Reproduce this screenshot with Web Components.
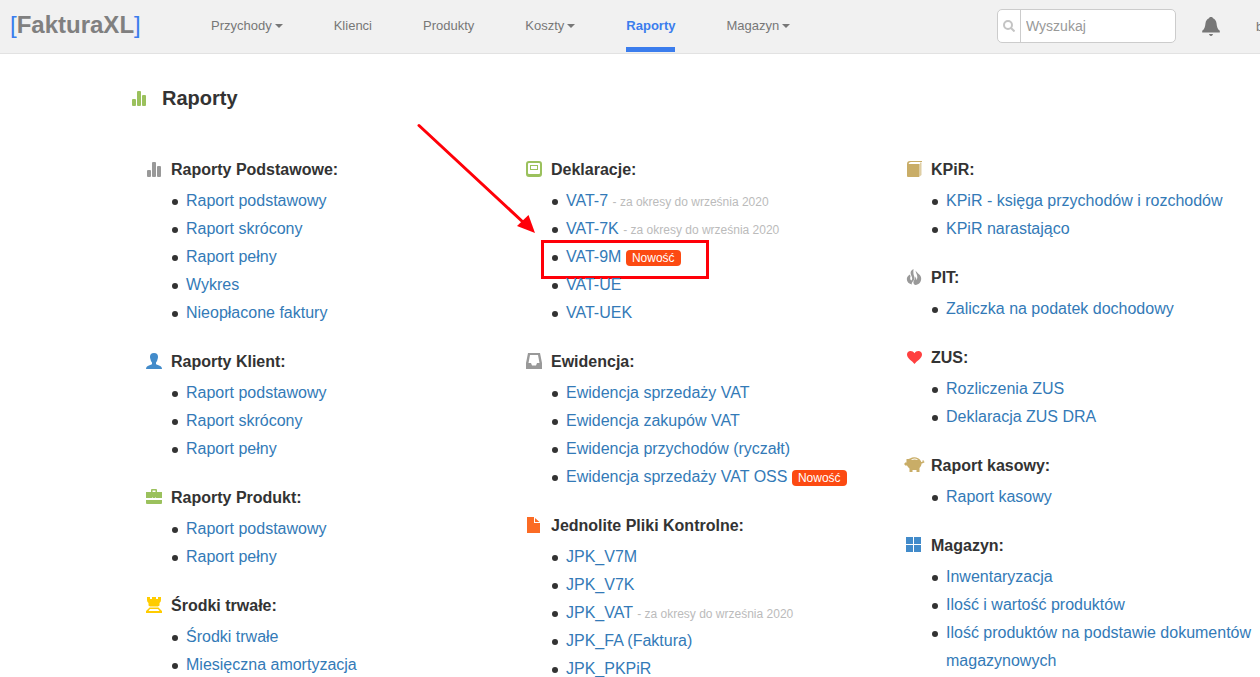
<!DOCTYPE html>
<html lang="pl">
<head>
<meta charset="utf-8">
<title>FakturaXL - Raporty</title>
<style>
  html { overflow: hidden; }
  body { margin: 0; background: #fff; color: #333; font: 16px/28px "Liberation Sans", Arial, sans-serif; }
</style>
</head>
<body>
<app-header>
  <nav-item menu>Przychody</nav-item>
  <nav-item>Klienci</nav-item>
  <nav-item>Produkty</nav-item>
  <nav-item menu>Koszty</nav-item>
  <nav-item active>Raporty</nav-item>
  <nav-item menu>Magazyn</nav-item>
</app-header>
<report-page heading="Raporty">
  <report-column>
    <report-group icon="bars" heading="Raporty Podstawowe:">
      <report-item label="Raport podstawowy"></report-item>
      <report-item label="Raport skrócony"></report-item>
      <report-item label="Raport pełny"></report-item>
      <report-item label="Wykres"></report-item>
      <report-item label="Nieopłacone faktury"></report-item>
    </report-group>
    <report-group icon="user" heading="Raporty Klient:">
      <report-item label="Raport podstawowy"></report-item>
      <report-item label="Raport skrócony"></report-item>
      <report-item label="Raport pełny"></report-item>
    </report-group>
    <report-group icon="briefcase" heading="Raporty Produkt:">
      <report-item label="Raport podstawowy"></report-item>
      <report-item label="Raport pełny"></report-item>
    </report-group>
    <report-group icon="rook" heading="Środki trwałe:">
      <report-item label="Środki trwałe"></report-item>
      <report-item label="Miesięczna amortyzacja"></report-item>
    </report-group>
  </report-column>
  <report-column>
    <report-group icon="declaration" heading="Deklaracje:">
      <report-item label="VAT-7"><period-note>- za okresy do września 2020</period-note></report-item>
      <report-item label="VAT-7K"><period-note>- za okresy do września 2020</period-note></report-item>
      <report-item label="VAT-9M"><new-badge>Nowość</new-badge><arrow-callout></arrow-callout></report-item>
      <report-item label="VAT-UE"></report-item>
      <report-item label="VAT-UEK"></report-item>
    </report-group>
    <report-group icon="inbox" heading="Ewidencja:">
      <report-item label="Ewidencja sprzedaży VAT"></report-item>
      <report-item label="Ewidencja zakupów VAT"></report-item>
      <report-item label="Ewidencja przychodów (ryczałt)"></report-item>
      <report-item label="Ewidencja sprzedaży VAT OSS"><new-badge>Nowość</new-badge></report-item>
    </report-group>
    <report-group icon="file" heading="Jednolite Pliki Kontrolne:">
      <report-item label="JPK_V7M"></report-item>
      <report-item label="JPK_V7K"></report-item>
      <report-item label="JPK_VAT"><period-note>- za okresy do września 2020</period-note></report-item>
      <report-item label="JPK_FA (Faktura)"></report-item>
      <report-item label="JPK_PKPiR"></report-item>
    </report-group>
  </report-column>
  <report-column>
    <report-group icon="book" heading="KPiR:">
      <report-item label="KPiR - księga przychodów i rozchodów"></report-item>
      <report-item label="KPiR narastająco"></report-item>
    </report-group>
    <report-group icon="fire" heading="PIT:">
      <report-item label="Zaliczka na podatek dochodowy"></report-item>
    </report-group>
    <report-group icon="heart" heading="ZUS:">
      <report-item label="Rozliczenia ZUS"></report-item>
      <report-item label="Deklaracja ZUS DRA"></report-item>
    </report-group>
    <report-group icon="pig" heading="Raport kasowy:">
      <report-item label="Raport kasowy"></report-item>
    </report-group>
    <report-group icon="tiles" heading="Magazyn:">
      <report-item label="Inwentaryzacja"></report-item>
      <report-item label="Ilość i wartość produktów"></report-item>
      <report-item label="Ilość produktów na podstawie dokumentów magazynowych"></report-item>
    </report-group>
  </report-column>
</report-page>

<script>
const ICONS = {
  bars: ['#999', '<rect x="1" y="9" width="4" height="7" rx="1"/><rect x="6" y="1" width="4" height="15" rx="1"/><rect x="11" y="5" width="4" height="11" rx="1"/>'],
  user: ['#428bca', '<path d="M8 0C5.200 0 4 1.600 4 3.800c0 1 .1 1.600.5 2.400.3 1.800.9 2.700 1.500 3.300v1.500c-.5.600-1.500.9-3 1.400C1.200 13 0 13.700 0 16h16c0-2.300-1.200-3-3-3.600-1.500-.5-2.500-.8-3-1.400V9.500c.6-.6 1.200-1.500 1.500-3.300.4-.8.5-1.400.5-2.400C12 1.600 10.800 0 8 0z"/>'],
  briefcase: ['#9bc15d', '<path d="M5 3V1q0-1 1-1h4q1 0 1 1v2h5v6h-6V8H9.500v1h-3V8H6v1H0V3zM6.500 3h3V1.500h-3zM0 11h16v3q0 1-1 1H1q-1 0-1-1z"/>'],
  rook: ['#fc0', '<path d="M1 0h3v2h2V0h4v2h2V0h3v3q0 2-1.500 3v2.500L12 9.500H4L2.500 8.500V6Q1 5 1 3z"/><path fill-rule="evenodd" d="M3.500 10.500h9L16 14v2H0v-2zm.5 1.500L2.500 14h11L12 12z"/>'],
  declaration: ['#9bc15d', '<path fill-rule="evenodd" d="M3 0h10q3 0 3 3v10q0 3-3 3H3q-3 0-3-3V3q0-3 3-3zm0 2Q2 2 2 3v9q0 1 1 1h10q1 0 1-1V3q0-1-1-1zM4 4h8v5H4zm1 1v3h6V5z"/>'],
  inbox: ['#999', '<path fill-rule="evenodd" d="M2 0h12l2 10v6H0V10zm2 2-1.500 8H5l1 2.500h4l1-2.500h2.500L12 2z"/>'],
  file: ['#fb6b24', '<path d="M1 0h7v6h6v10H1zM9 1l4.500 4H9z"/>'],
  book: ['#c9ad67', '<path d="M1 3h12v13H2q-1 0-1-1z"/><path d="M13 3h1V1.500h1.500V14L13 16z" fill-opacity=".6"/><path d="M1 3q0-3 3-3h12v1H5Q3 1 2.500 3z"/>'],
  fire: ['#999', '<path d="M7.500 0C4 1.500 4.200 4.500 5.500 7c1 2 1 3.500-.2 4.500C4 10.500 4 9 4.500 7.500l-.5-2C2.500 6.500.8 7.500.8 10c0 3 2.200 5 5.200 5.500-1-2 1.800-3.500 2.500-5.500.5-1.800-.8-3-1-5-.2-1.800-.2-3.500 0-5z"/><path d="M9.500 1.500c.5 3 1.800 4 1.800 6.500 0 1.500-.3 2.200-1 3 0-1.500-.2-2.500-.8-3.500 0 3-2.500 4-2 6.500.2 1 .8 1.600 2 2 3.500-.5 5.700-3 5.700-6.500C15.200 6 12 5 9.500 1.500z"/>'],
  heart: ['#ff4040', '<path d="M8.500 15C6.500 12 1 9.500 1 5.500 1 3.300 2.500 2 4.500 2 6.200 2 7.500 2.800 8.500 4.200 9.500 2.800 10.500 2 12.300 2 14.500 2 16 3.300 16 5.500 16 9.500 10.500 12 8.500 15z"/>'],
  pig: ['#c9ad67', '<path fill-rule="evenodd" d="M4 1.500Q8-.8 12.500 1.500c1 .6 2.200 1.700 2.800 3.500 1.300 0 1.500-.6 1.200-1.800h1q.4.800.2 1.300h.6v1.200h-.8c-.4.500-1 .8-1.900.8-.1 1.800-1 3.200-2.100 4.500v4H10.500v-2h-4v2H3.500v-3.500C2.300 10.500 1.500 9.500 1 8.500h-2V7.500h-1v-1h1V5.500h1.500C.4 4 .5 3.200.5 2q2.200 0 3.500-.5zM5.500 3q3.300-1.200 6 0v-.8q-2.700-1.200-6 0z"/>'],
  tiles: ['#428bca', '<path d="M0 0h7v7H0zM8 0h7v7H8zM0 8h7v7H0zM8 8h7v7H8z"/>']
};

const define = (name, render) => customElements.define(name, class extends HTMLElement {
  connectedCallback() {
    if (!this.shadowRoot) this.attachShadow({ mode: 'open' }).innerHTML = render(this);
  }
});

define('ui-icon', el => {
  const [color, shape] = ICONS[el.getAttribute('name')];
  return `<style>
    :host { display: block; flex: none; width: 16px; height: 16px; }
    svg { display: block; overflow: visible; fill: var(--icon-color, ${color}); }
  </style><svg width="16" height="16" viewBox="0 0 16 16" aria-hidden="true">${shape}</svg>`;
});

define('app-header', () => `<style>
    :host { display: block; background: #f1f1f1; border-bottom: 1px solid #e2e2e2; overflow: hidden; }
    header { display: flex; align-items: center; height: 53px; padding-left: 10px; }
    .logo { width: 201px; flex: none; }
    .logo a { color: #3b7ded; font-size: 24px; text-decoration: none; }
    .logo b { color: #808080; }
    nav { display: flex; gap: 51px; align-self: stretch; }
    search-box { margin-left: auto; }
    button { flex: none; margin: 0 35px 0 25px; padding: 0; border: 0; background: none; width: 20px; height: 20px; }
    button svg { display: block; }
    .account { flex: none; width: 4px; color: #777; font-size: 13px; text-decoration: none; }
  </style>
  <header>
    <div class="logo"><a href="#">[<b>FakturaXL</b>]</a></div>
    <nav><slot></slot></nav>
    <search-box></search-box>
    <button type="button" aria-label="Powiadomienia"><svg width="20" height="20" viewBox="0 0 20 20" fill="#777"><path d="M10 0c1 0 1.800.500 2 1.200 2 .8 3.200 2.600 3.500 5 .4 3.800 1 5.800 3.300 7.600v1.700H1.200v-1.700C3.500 12 4.100 10 4.500 6.200c.3-2.400 1.500-4.200 3.500-5C8.200.5 9 0 10 0zM8 17h4q0 1-1.500 2h-1Q8 18 8 17z"/></svg></button>
    <a class="account" href="#">b</a>
  </header>`);

define('nav-item', el => `<style>
    :host { display: flex; }
    a { display: flex; align-items: center; box-sizing: border-box; height: 52px; border-top: 5px solid transparent; border-bottom: 5px solid transparent; color: #777; font-size: 13px; text-decoration: none; }
    :host([active]) a { color: #3b7ded; font-weight: bold; border-bottom-color: #3b7ded; }
    i { margin-left: 3px; border: 4px solid transparent; border-top-color: #777; border-bottom: 0; }
  </style><a href="#"><slot></slot>${el.hasAttribute('menu') ? '<i></i>' : ''}</a>`);

define('search-box', () => `<style>
    :host { display: block; flex: none; width: 179px; }
    label { display: flex; box-sizing: border-box; height: 34px; margin-bottom: 1px; border: 1px solid #ccc; border-radius: 5px; background: #fff; overflow: hidden; }
    svg { flex: none; width: 12px; padding: 10px 5px; border-right: 1px solid #ccc; }
    input { flex: 1; min-width: 0; border: 0; outline: 0; padding: 0 5px; background: none; color: #555; font: 14px "Liberation Sans", Arial, sans-serif; }
    input::placeholder { color: #999; opacity: 1; }
  </style>
  <label><svg height="12" viewBox="0 0 12 12" fill="none" stroke="#c4c4c4" stroke-width="2"><circle cx="5" cy="5" r="4"/><path d="M8 8l3.500 3.500"/></svg><input type="text" placeholder="Wyszukaj" aria-label="Wyszukaj"></label>`);

define('report-page', el => `<style>
    :host { display: block; padding: 30px 5px 0 146px; }
    h1 { display: flex; align-items: center; gap: 15px; margin: 0 0 44px -15px; font-size: 20px; line-height: 28px; --icon-color: #9bc15d; }
    main { display: grid; grid-template-columns: repeat(3, minmax(0, 1fr)); column-gap: 31px; align-items: start; }
  </style>
  <h1><ui-icon name="bars"></ui-icon>${el.getAttribute('heading')}</h1>
  <main><slot></slot></main>`);

define('report-column', () => `<style>
    :host { display: flex; flex-direction: column; gap: 21px; }
  </style><slot></slot>`);

define('report-group', el => `<style>
    :host { display: block; }
    h2 { display: flex; align-items: center; gap: 9px; margin: 0 0 3px; font-size: 16px; line-height: 28px; }
    ui-icon { margin-bottom: 2px; }
    ul { margin: 0; padding: 0 0 0 40px; list-style: none; }
  </style>
  <h2><ui-icon name="${el.getAttribute('icon')}"></ui-icon>${el.getAttribute('heading')}</h2>
  <ul><slot></slot></ul>`);

define('report-item', el => `<style>
    :host { display: block; position: relative; }
    :host::before { content: ""; position: absolute; left: -14px; top: 12px; width: 6px; height: 6px; border-radius: 50%; background: #333; }
    a { color: #337ab7; text-decoration: none; }
    a:hover { text-decoration: underline; }
  </style><a href="#">${el.getAttribute('label')}</a> <slot></slot>`);

define('period-note', () => `<style>
    :host { color: #bbb; font-size: 12px; line-height: 16px; }
  </style><slot></slot>`);

define('new-badge', () => `<style>
    :host { display: inline-block; padding: 0 6px; border-radius: 4px; background: #fc4a12; color: #fff; font-size: 12px; line-height: 16px; }
  </style><slot></slot>`);

define('arrow-callout', () => `<style>
    :host { position: absolute; left: -156px; top: -123px; pointer-events: none; }
    svg { display: block; }
  </style>
  <svg width="304" height="162" viewBox="410 120 304 162" aria-hidden="true">
    <rect x="542.500" y="241.500" width="165" height="36" fill="none" stroke="#ff0008" stroke-width="3"/>
    <path d="M419 125.500 524 223" stroke="#ff0008" stroke-width="3" stroke-linecap="round"/>
    <path d="M535 233 517 226 528.500 215z" fill="#ff0008"/>
  </svg>`);

document.querySelectorAll('report-item').forEach(item => item.setAttribute('role', 'listitem'));
</script>
</body>
</html>
